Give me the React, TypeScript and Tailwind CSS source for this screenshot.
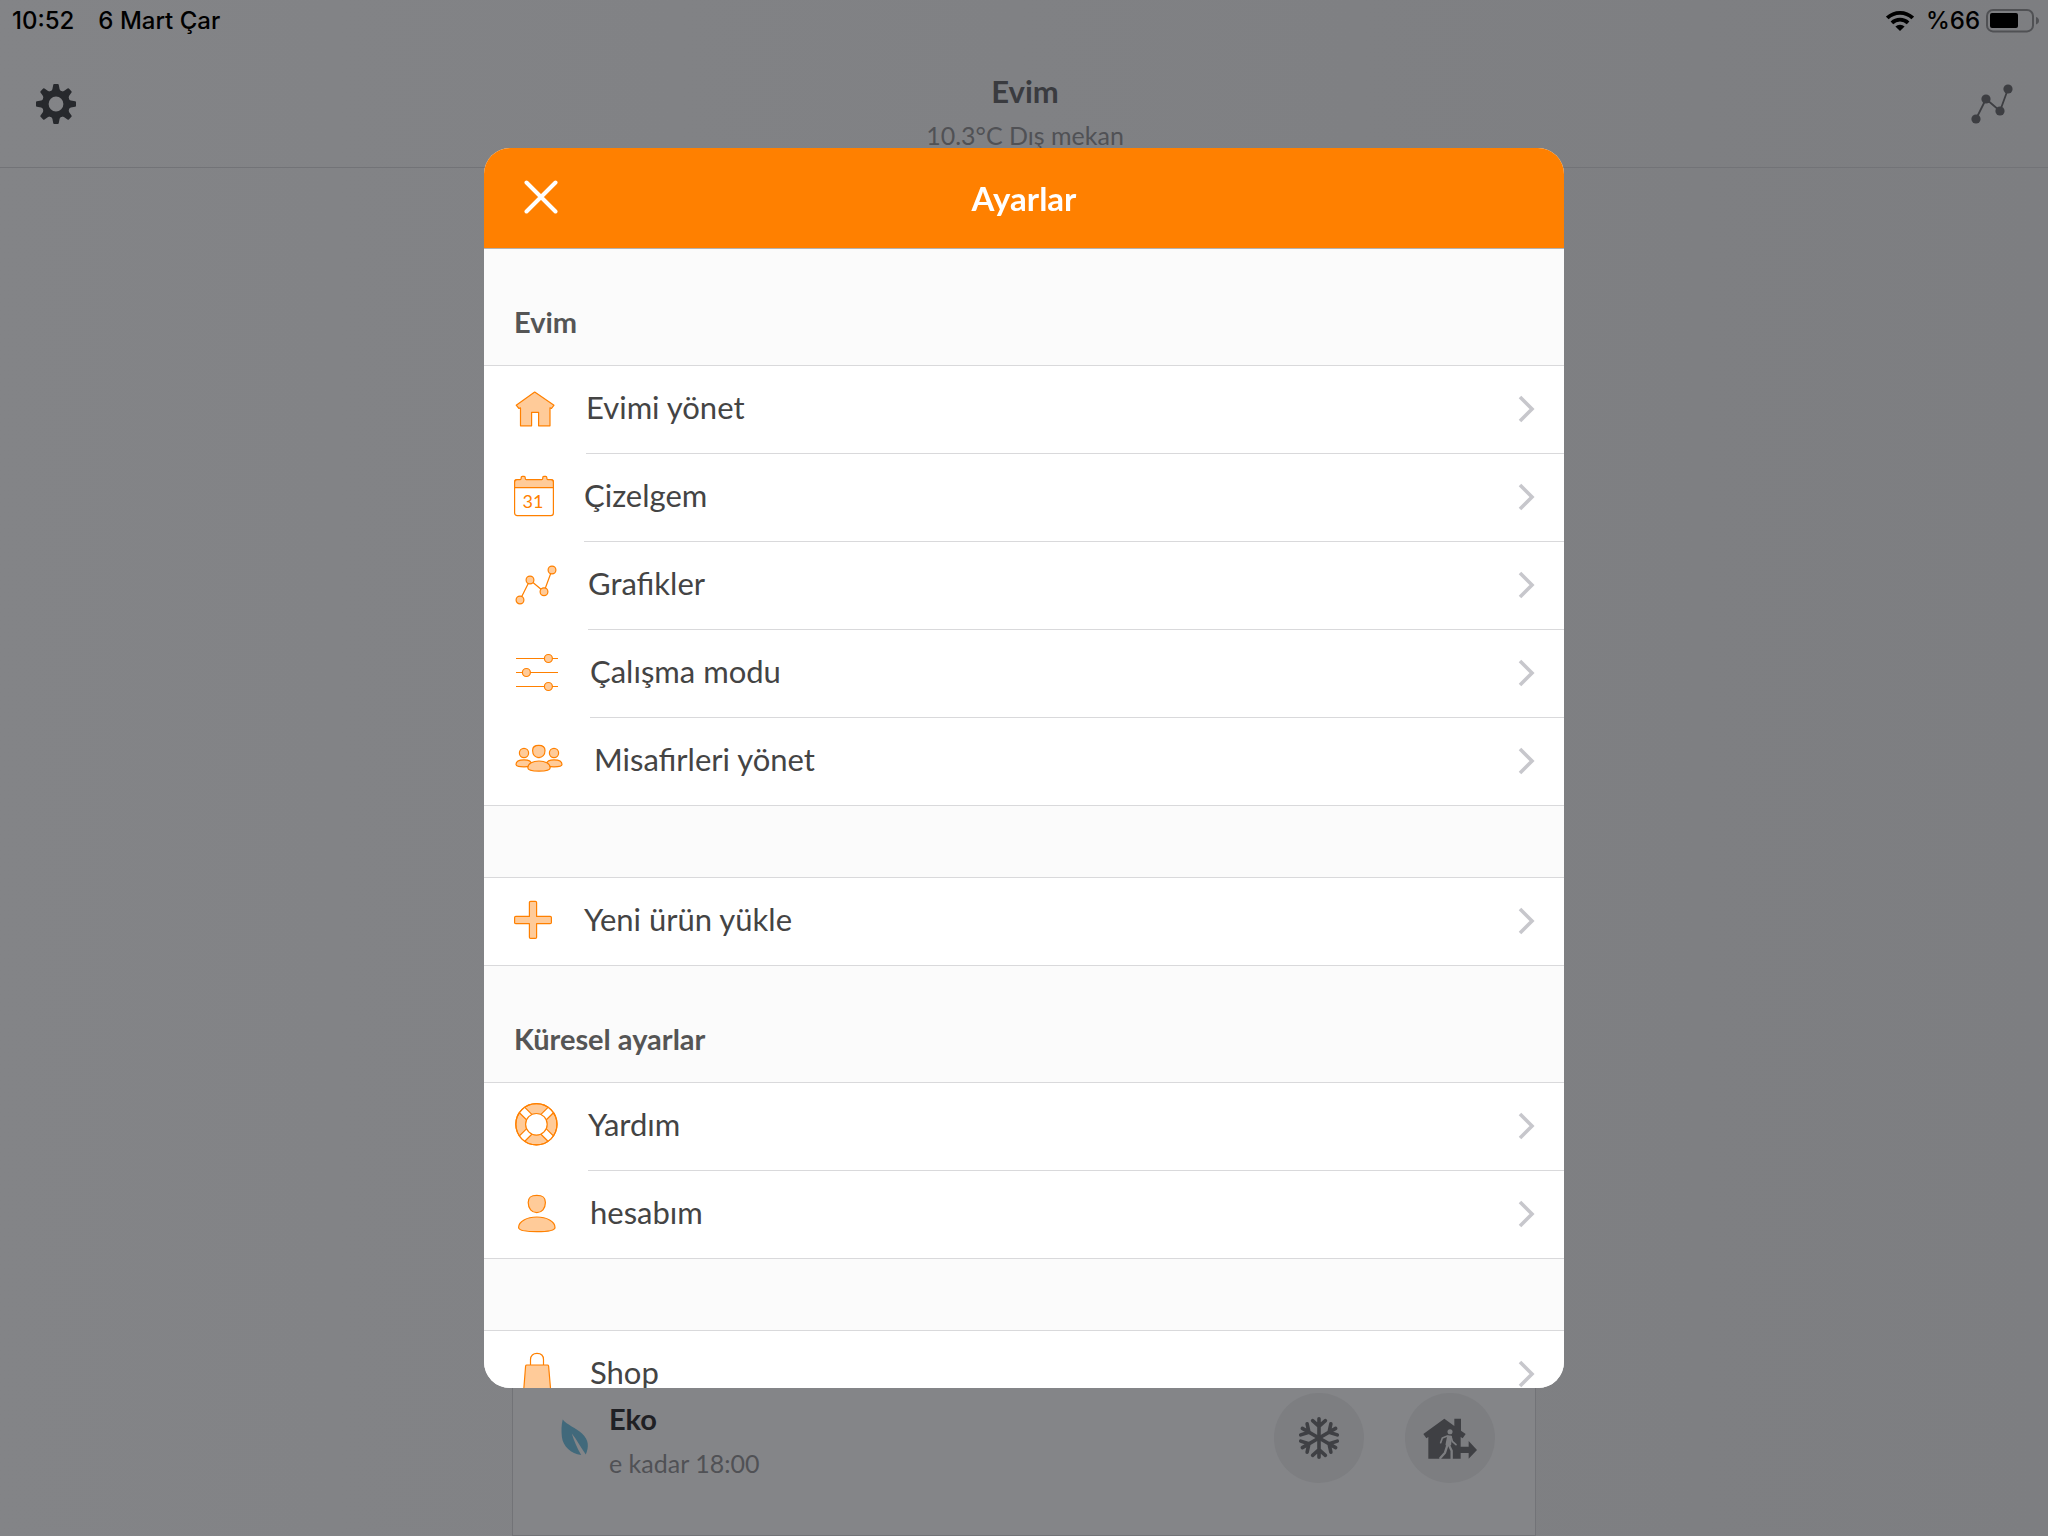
import type { ReactNode } from 'react'

const SKETCH = {
  fill: '#ffcb99',
  stroke: '#ff8000',
  strokeWidth: 1.2,
  strokeLinejoin: 'round',
} as const

function HomeIcon() {
  return (
    <svg width="42" height="47" viewBox="0 0 42 47" {...SKETCH}>
      <path d="M20.7 6L40 19.2L37.5 22.5L36 21.8V39.8H24.6V26.4H17.6V39.8H6.5V21.8L5 22.5L2.2 19.2Z" />
    </svg>
  )
}

function CalendarIcon() {
  return (
    <svg width="40" height="47" viewBox="0 0 40 47" {...SKETCH}>
      <rect x="0.6" y="5.6" width="38.8" height="36" rx="2.6" fill="none" />
      <path d="M0.6 13.6V8.2Q0.6 5.6 3.2 5.6H6.2Q7.2 5.4 7.2 4V3.4Q7.2 2.4 8.2 2.4H10.2Q11.2 2.4 11.2 3.4V4Q11.2 5.4 12.2 5.6H27.8Q28.8 5.4 28.8 4V3.4Q28.8 2.4 29.8 2.4H31.8Q32.8 2.4 32.8 3.4V4Q32.8 5.4 33.8 5.6H36.8Q39.4 5.6 39.4 8.2V13.6Z" />
      <text x="19" y="34" textAnchor="middle" fontSize="18" fill="#ff8000" stroke="none">
        31
      </text>
    </svg>
  )
}

function ChartIcon() {
  return (
    <svg width="44" height="47" viewBox="0 0 44 47" {...SKETCH}>
      <path d="M6 38L16 18L30 29.7L38 8" fill="none" />
      <circle cx="6" cy="38" r="3.9" />
      <circle cx="16" cy="18" r="3.9" />
      <circle cx="30" cy="29.7" r="3.9" />
      <circle cx="38" cy="8" r="3.9" />
    </svg>
  )
}

function SlidersIcon() {
  return (
    <svg width="46" height="47" viewBox="0 0 46 47" {...SKETCH}>
      <path d="M2 8.5H44M2 22.5H44M2 36.5H44" fill="none" />
      <circle cx="34.4" cy="8.5" r="4" />
      <circle cx="12.4" cy="22.5" r="4" />
      <circle cx="34.4" cy="36.5" r="4" />
    </svg>
  )
}

function GuestsIcon() {
  return (
    <svg width="50" height="47" viewBox="0 0 50 47" {...SKETCH}>
      <circle cx="10" cy="16" r="4.6" />
      <circle cx="40" cy="16" r="4.6" />
      <path d="M2 27.6C2 24.4 5.8 22.8 10 22.8C14.2 22.8 17.6 24 17.6 27.6C17.6 29.4 14 29.9 10 29.9C6 29.9 2 29.6 2 27.6Z" />
      <path d="M48 27.6C48 24.4 44.2 22.8 40 22.8C35.8 22.8 32.4 24 32.4 27.6C32.4 29.4 36 29.9 40 29.9C44 29.9 48 29.6 48 27.6Z" />
      <path d="M18.6 13.6C18.6 9.6 20.6 8.4 24.8 8.4C29 8.4 31 9.6 31 13.6C31 17.8 28.4 20.6 24.8 20.6C21.2 20.6 18.6 17.8 18.6 13.6Z" />
      <path d="M13.8 30.8C13.8 26.4 19 24 25 24C31 24 36.2 26.4 36.2 30.8C36.2 33.4 31 34.2 25 34.2C19 34.2 13.8 33.4 13.8 30.8Z" />
    </svg>
  )
}

function PlusIcon() {
  return (
    <svg width="40" height="47" viewBox="0 0 40 47" {...SKETCH}>
      <path d="M16.6 4.4H21.4Q22.6 4.4 22.6 5.6V19.4H36.2Q37.4 19.4 37.4 20.6V25.4Q37.4 26.6 36.2 26.6H22.6V40.2Q22.6 41.4 21.4 41.4H16.6Q15.4 41.4 15.4 40.2V26.6H1.8Q0.6 26.6 0.6 25.4V20.6Q0.6 19.4 1.8 19.4H15.4V5.6Q15.4 4.4 16.6 4.4Z" />
    </svg>
  )
}

function HelpIcon() {
  return (
    <svg width="44" height="47" viewBox="0 0 44 47" {...SKETCH}>
      <circle cx="22.4" cy="21.3" r="20.6" />
      <g transform="rotate(45 22.4 21.3)">
        <path d="M18.6 1.1V41.5H26.2V1.1ZM2.2 17.5H42.6V25.1H2.2Z" fill="#fff" stroke="none" />
        <path d="M18.6 1.1V41.5M26.2 1.1V41.5M2.2 17.5H42.6M2.2 25.1H42.6" />
      </g>
      <circle cx="22.4" cy="21.3" r="20.6" fill="none" />
      <circle cx="22.4" cy="21.3" r="10.8" fill="#fff" />
    </svg>
  )
}

function AccountIcon() {
  return (
    <svg width="46" height="47" viewBox="0 0 46 47" {...SKETCH}>
      <path d="M14.2 12.6C14.2 7 17 5.4 22.8 5.4C28.6 5.4 31.4 7 31.4 12.6C31.4 18.6 27.8 22.6 22.8 22.6C17.8 22.6 14.2 18.6 14.2 12.6Z" />
      <path d="M4.6 37.4C4.6 31.4 13 27 22.8 27C32.6 27 41 31.4 41 37.4C41 40.6 32 41.6 22.8 41.6C13.6 41.6 4.6 40.6 4.6 37.4Z" />
    </svg>
  )
}

function ShopIcon() {
  return (
    <svg width="46" height="47" viewBox="0 0 46 47" {...SKETCH}>
      <path d="M16.5 15V9.6C16.5 5.6 19.2 3.4 23 3.4C26.8 3.4 29.5 5.6 29.5 9.6V15" fill="none" />
      <path d="M12.8 15H33.4Q34.4 15 34.6 16L37 44H9.4L11.6 16Q11.8 15 12.8 15Z" />
    </svg>
  )
}

function Chevron() {
  return (
    <svg width="17" height="28" viewBox="0 0 17 28" fill="none" stroke="#c7c7cc" strokeWidth="3.6">
      <path d="M2 2L14 14L2 26" />
    </svg>
  )
}

function GearIcon() {
  const teeth = [0, 45, 90, 135, 180, 225, 270, 315]
  return (
    <svg width="40" height="40" viewBox="0 0 40 40" fill="#27292d">
      {teeth.map((angle) => (
        <path
          key={angle}
          transform={`rotate(${angle} 20 20)`}
          d="M17.2 0.9Q17.3 0 18.2 0H21.8Q22.7 0 22.8 0.9L23.6 5.2Q24 6.8 26.6 8H13.4Q16 6.8 16.4 5.2Z"
        />
      ))}
      <circle cx="20" cy="20" r="10.6" fill="none" stroke="#27292d" strokeWidth="6.4" />
    </svg>
  )
}

function HeaderChartIcon() {
  return (
    <svg width="44" height="42" viewBox="0 0 44 42" fill="#3d3e42">
      <path d="M6 36L16 16L30 28L38 6" fill="none" stroke="#3d3e42" strokeWidth="1.8" />
      <circle cx="6" cy="36" r="4.6" />
      <circle cx="16" cy="16" r="4.6" />
      <circle cx="30" cy="28" r="4.6" />
      <circle cx="38" cy="6" r="4.6" />
    </svg>
  )
}

function WifiIcon() {
  return (
    <svg width="28" height="20" viewBox="0 0 28 20" fill="none" stroke="#000" strokeWidth="3.8">
      <path d="M1.3 7A18.4 18.4 0 0 1 26.7 7" />
      <path d="M5.9 11.8A11.8 11.8 0 0 1 22.1 11.8" />
      <path d="M14 20L9.4 15.5A6.6 6.6 0 0 1 18.6 15.5Z" fill="#000" stroke="none" />
    </svg>
  )
}

function BatteryIcon() {
  return (
    <svg width="54" height="24" viewBox="0 0 54 24">
      <rect x="1" y="1" width="46" height="21.4" rx="6" fill="none" stroke="#505154" strokeWidth="2" />
      <rect x="4" y="4" width="28" height="15" rx="2" fill="#000" />
      <path d="M50 8Q53 9 53 11.7Q53 14.4 50 15.4Z" fill="#505154" />
    </svg>
  )
}

function LeafIcon() {
  return (
    <svg width="28" height="37" viewBox="0 0 28 37" fill="#41697b">
      <path d="M1.7 0.6C6 6 15 9 21 14.5C28 21 28 28 24.8 35.4C20 29 16 21 10.8 14.6C13 22 16 29 20.2 36C10 34.5 2 27.5 0.9 18C0.3 12 0.3 6 1.7 0.6Z" />
    </svg>
  )
}

function SnowflakeIcon() {
  const arms = [0, 60, 120, 180, 240, 300]
  return (
    <svg width="44" height="44" viewBox="0 0 44 44" fill="none" stroke="#3f4044" strokeWidth="3.6" strokeLinecap="round">
      {arms.map((angle) => (
        <path key={angle} transform={`rotate(${angle} 22 22)`} d="M22 22V2.8M15.6 4.6L22 10.4L28.4 4.6" />
      ))}
    </svg>
  )
}

function LeaveHomeIcon() {
  return (
    <svg width="54" height="41" viewBox="0 0 162 123" fill="#3f4044">
      <path d="M64 2L94 24V2H114V38L128 48L119 61L113 57V86H137V69L162 96L137 122V105H113V122H16V57L10 61L1 48Z" />
      <g fill="none" stroke="#7d7e81" strokeLinecap="round" strokeLinejoin="round">
        <circle cx="81" cy="41" r="7.6" fill="#7d7e81" stroke="none" />
        <path d="M75 54L70 80L82 80L84 56Z" fill="#7d7e81" strokeWidth="5" />
        <path d="M73 54L58 60L53 74" strokeWidth="5" />
        <path d="M84 56L88 70L99 80" strokeWidth="5" />
        <path d="M73 82L66 104L52 120" strokeWidth="7" />
        <path d="M78 82L86 98V122" strokeWidth="7" />
      </g>
    </svg>
  )
}

function SectionTitle({ children }: { children: ReactNode }) {
  return (
    <h2 className="flex h-[117px] items-end border-b border-[#d9d9db] bg-[#fbfbfb] px-[30px] pb-[25px] text-[29px] leading-9 font-bold text-[#555]">
      {children}
    </h2>
  )
}

function Spacer() {
  return <div className="h-[72px] border-b border-[#d9d9db] bg-[#fbfbfb]" />
}

type Item = { label: string; icon: ReactNode }

function Group({ items }: { items: Item[] }) {
  return (
    <ul className="border-b border-[#d9d9db] bg-white">
      {items.map(({ label, icon }, i) => (
        <li key={label}>
          <button type="button" className="flex w-full items-center gap-[30px] pl-[30px] text-left">
            <span className="shrink-0 pb-0.5">{icon}</span>
            <span
              className={
                i < items.length - 1
                  ? 'flex h-[88px] flex-1 items-center justify-between border-b border-[#d9d9db] pr-[29px] pb-0.5'
                  : 'flex h-[87px] flex-1 items-center justify-between pr-[29px] pb-0.5'
              }
            >
              <span className="pb-[3px] text-[31px] leading-10 text-[#444]">{label}</span>
              <Chevron />
            </span>
          </button>
        </li>
      ))}
    </ul>
  )
}

const HOME_ITEMS: Item[] = [
  { label: 'Evimi yönet', icon: <HomeIcon /> },
  { label: 'Çizelgem', icon: <CalendarIcon /> },
  { label: 'Grafikler', icon: <ChartIcon /> },
  { label: 'Çalışma modu', icon: <SlidersIcon /> },
  { label: 'Misafirleri yönet', icon: <GuestsIcon /> },
]

const GLOBAL_ITEMS: Item[] = [
  { label: 'Yardım', icon: <HelpIcon /> },
  { label: 'hesabım', icon: <AccountIcon /> },
]

function SettingsDialog() {
  return (
    <div className="fixed inset-0 flex items-center justify-center">
      <div
        role="dialog"
        aria-labelledby="settings-title"
        className="flex h-[calc(100vh-296px)] w-full max-w-[1080px] flex-col overflow-hidden rounded-[26px] bg-white"
      >
        <header className="grid h-[101px] shrink-0 grid-cols-[1fr_auto_1fr] items-center border-b border-[#b2b2b2] bg-[#ff8000] px-10 text-white">
          <button type="button" aria-label="Kapat" className="justify-self-start pb-0.5">
            <svg width="34" height="34" viewBox="0 0 34 34" stroke="#fff" strokeWidth="4" strokeLinecap="round">
              <path d="M2.5 2.5L31.5 31.5M31.5 2.5L2.5 31.5" />
            </svg>
          </button>
          <h1 id="settings-title" className="text-[33px] leading-10 font-bold">
            Ayarlar
          </h1>
        </header>
        <div className="min-h-0 flex-1 overflow-hidden">
          <SectionTitle>Evim</SectionTitle>
          <Group items={HOME_ITEMS} />
          <Spacer />
          <Group items={[{ label: 'Yeni ürün yükle', icon: <PlusIcon /> }]} />
          <SectionTitle>Küresel ayarlar</SectionTitle>
          <Group items={GLOBAL_ITEMS} />
          <Spacer />
          <Group items={[{ label: 'Shop', icon: <ShopIcon /> }]} />
        </div>
      </div>
    </div>
  )
}

export default function App() {
  return (
    <div className="flex h-screen flex-col overflow-hidden bg-linear-to-r from-[#838487] to-[#7d7e81] font-[Lato,'Noto_Sans',sans-serif]">
      <div className="flex h-[42px] shrink-0 items-center justify-between pr-2 pl-3 font-[Inter,sans-serif] text-2xl font-medium text-black">
        <div className="flex gap-6">
          <span>10:52</span>
          <span>6 Mart Çar</span>
        </div>
        <div className="flex items-center">
          <WifiIcon />
          <span className="mr-1.5 ml-3">%66</span>
          <BatteryIcon />
        </div>
      </div>

      <header className="grid h-[126px] shrink-0 grid-cols-[1fr_auto_1fr] items-center border-b border-[#727377] pr-[34px] pl-9">
        <button type="button" aria-label="Ayarlar" className="justify-self-start pb-0.5">
          <GearIcon />
        </button>
        <div className="flex flex-col items-center gap-2 pt-4">
          <h1 className="text-[31px] leading-9 font-bold text-[#3a3b3f]">Evim</h1>
          <p className="text-[25px] leading-9 text-[#505155]">10.3°C Dış mekan</p>
        </div>
        <button type="button" aria-label="Grafikler" className="justify-self-end pb-0.5">
          <HeaderChartIcon />
        </button>
      </header>

      <main className="flex min-h-0 flex-1 justify-center">
        <section className="flex w-full max-w-[1024px] items-end border border-[#727377] bg-[#848588] px-10 pb-[50px]">
          <div className="flex flex-1 items-center gap-5 pl-2">
            <LeafIcon />
            <div className="pt-2">
              <h2 className="text-[29px] leading-[44px] font-bold text-[#1f2024]">Eko</h2>
              <p className="text-[25px] leading-[44px] text-[#505155]">e kadar 18:00</p>
            </div>
          </div>
          <div className="flex gap-[41px] pb-0.5">
            <button
              type="button"
              aria-label="Donma koruması"
              className="flex size-[90px] items-center justify-center rounded-full bg-[#7d7e81]"
            >
              <SnowflakeIcon />
            </button>
            <button
              type="button"
              aria-label="Dışarıda"
              className="flex size-[90px] items-center justify-center rounded-full bg-[#7d7e81]"
            >
              <LeaveHomeIcon />
            </button>
          </div>
        </section>
      </main>

      <SettingsDialog />
    </div>
  )
}
